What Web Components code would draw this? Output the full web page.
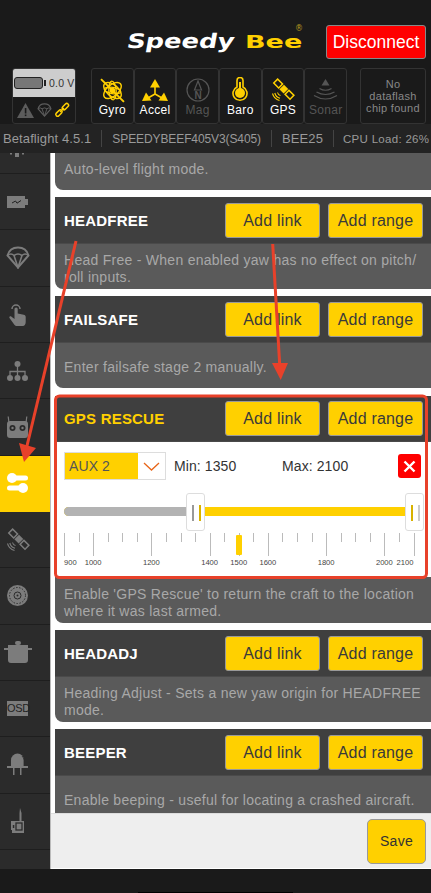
<!DOCTYPE html>
<html>
<head>
<meta charset="utf-8">
<style>
  html, body { margin: 0; padding: 0; background: #1a1a1a; }
  body { width: 431px; height: 893px; overflow: hidden; position: relative; font-family: "Liberation Sans", Arial, sans-serif; }
  #main { display: flex; height: 716px; }
</style>
</head>
<body>
<sb-header></sb-header>
<sb-status></sb-status>
<sb-infobar></sb-infobar>
<div id="main">
  <sb-nav></sb-nav>
  <sb-content>
    <sb-mode stub>Auto-level flight mode.</sb-mode>
    <sb-mode title="HEADFREE">Head Free - When enabled yaw has no effect on pitch/<br>roll inputs.</sb-mode>
    <sb-mode title="FAILSAFE" spaced>Enter failsafe stage 2 manually.</sb-mode>
    <sb-mode title="GPS RESCUE" active>
      <sb-range slot="range"></sb-range>
      Enable 'GPS Rescue' to return the craft to the location<br>where it was last armed.
    </sb-mode>
    <sb-mode title="HEADADJ">Heading Adjust - Sets a new yaw origin for HEADFREE<br>mode.</sb-mode>
    <sb-mode title="BEEPER" spaced>Enable beeping - useful for locating a crashed aircraft.</sb-mode>
  </sb-content>
</div>
<sb-footer></sb-footer>
<sb-annotations></sb-annotations>

<script>
const YELLOW = '#ffd000';

const ICONS = {
  gyro: `<svg width="25" height="25" viewBox="0 0 24 24" fill="none" stroke="currentColor" stroke-width="1.3"><ellipse cx="12" cy="12" rx="10" ry="5.5" transform="rotate(40 12 12)"/><ellipse cx="12" cy="12" rx="10" ry="5.5" transform="rotate(-40 12 12)"/><ellipse cx="12" cy="12" rx="9" ry="3.5" transform="rotate(85 12 12)"/><ellipse cx="12" cy="12" rx="8" ry="3" transform="rotate(10 12 12)"/><path d="M1 1L23 23" stroke-width="1.8"/><circle cx="12" cy="12" r="2" fill="currentColor"/></svg>`,
  accel: `<svg width="26" height="23" viewBox="0 0 26 23" fill="currentColor"><path d="M13 0L18 8.5H8Z"/><path d="M0 22L4 13.5L9.5 21.5Z"/><path d="M26 22L22 13.5L16.5 21.5Z"/><path d="M13 8V15M13 15L6 19M13 15L20 19" stroke="currentColor" stroke-width="1.6" fill="none"/></svg>`,
  mag: `<svg width="24" height="24" viewBox="0 0 24 24" fill="none" stroke="currentColor" stroke-width="1.2"><circle cx="12" cy="12" r="11"/><path d="M12 3L8.5 12H15.5Z"/><text x="12" y="21" font-family="Liberation Sans" font-size="10" font-weight="bold" text-anchor="middle" fill="currentColor" stroke="none">N</text></svg>`,
  baro: `<svg width="16" height="26" viewBox="0 0 16 26"><path d="M5 10V3.5a3 3 0 0 1 6 0V10a7 7 0 1 1-6 0Z" fill="none" stroke="currentColor" stroke-width="1.6"/><circle cx="8" cy="16" r="5" fill="currentColor"/><rect x="7" y="5" width="2" height="8" fill="currentColor"/></svg>`,
  sat: `<svg width="24" height="24" viewBox="0 0 24 24" fill="none" stroke="currentColor"><g transform="rotate(45 13 11)"><rect x="10" y="8" width="6" height="6.5" fill="currentColor" stroke="none"/><rect x="1.5" y="8.5" width="7" height="5.5" stroke-width="1.5"/><rect x="17.5" y="8.5" width="7" height="5.5" stroke-width="1.5"/></g><path d="M6.5 14.5a4 4 0 0 0 3 3M3.8 15a7 7 0 0 0 5.2 5.2M1.5 15.5a10 10 0 0 0 7 7" stroke-width="1.1"/></svg>`,
  sonar: `<svg width="25" height="23" viewBox="0 0 25 23" fill="none" stroke="currentColor" stroke-width="1.2"><path d="M12.5 0L16.5 6.5H8.5Z" fill="currentColor" stroke="none"/><path d="M6.5 9.5Q12.5 13 18.5 9.5M3.5 13Q12.5 18 21.5 13M1 16.5Q12.5 23.5 24 16.5"/></svg>`,
  warn: `<svg width="17" height="15" viewBox="0 0 17 15"><path d="M8.5 0L17 15H0Z" fill="currentColor"/><rect x="7.8" y="5" width="1.6" height="5.5" fill="#1a1a1a"/><rect x="7.8" y="11.5" width="1.6" height="1.6" fill="#1a1a1a"/></svg>`,
  chute: `<svg width="24" height="23" viewBox="0 0 24 23" fill="none" stroke="currentColor" stroke-width="2"><path d="M1.5 9.5C3 4 7 1.5 12 1.5S21 4 22.5 9.5L12 21.5Z"/><path d="M1.5 9.5Q5 6.5 8 9.5Q12 6.5 16 9.5Q19 6.5 22.5 9.5M8 9.5L12 21.5L16 9.5" stroke-width="1.6"/></svg>`,
  link: `<svg width="16" height="16" viewBox="0 0 16 16" fill="none" stroke="currentColor" stroke-width="1.5"><rect x="-3.2" y="-1.8" width="7.4" height="3.6" rx="1.8" transform="translate(4.6 11.4) rotate(-45)"/><rect x="-3.7" y="-1.8" width="7.4" height="3.6" rx="1.8" transform="translate(11.4 4.6) rotate(-45)"/><path d="M6 10L10 6"/></svg>`,
  battery: `<svg width="21" height="12" viewBox="0 0 21 12"><path d="M0 0H18V3H21V9H18V12H0Z" fill="currentColor"/><path d="M5 7L8.5 5L10 7.2L14 4.5" stroke="#222" fill="none"/></svg>`,
  hand: `<svg width="17" height="24" viewBox="0 0 17 24" fill="currentColor"><path d="M5.5 7a1.6 1.6 0 0 1 3.2 0v4.5l6 1.2c1.2.3 2 1.2 2 2.4V20c0 2-1 4-3 4H8c-1.5 0-2.3-.8-3-1.8L.5 16c-.7-1 .8-2.3 2-1.3l3 2.3Z"/><path d="M3 7a4 4 0 1 1 8 0" fill="none" stroke="currentColor" stroke-width="1.5"/></svg>`,
  tree: `<svg width="21" height="20" viewBox="0 0 21 20" fill="currentColor"><circle cx="10.5" cy="3" r="3"/><circle cx="3" cy="17" r="3"/><circle cx="10.5" cy="17" r="3"/><circle cx="18" cy="17" r="3"/><path d="M10.5 5V15M3 15V10.5H18V15" fill="none" stroke="currentColor" stroke-width="1.3"/></svg>`,
  remote: `<svg width="21" height="22" viewBox="0 0 21 22"><path d="M2 7L1.2 .5M19 7L19.8 .5" stroke="currentColor" stroke-width="1.2"/><rect x="0" y="5" width="21" height="17" rx="3" fill="currentColor"/><circle cx="5.5" cy="12" r="3" fill="#2b2b2b"/><circle cx="15.5" cy="12" r="3" fill="#2b2b2b"/><circle cx="5.5" cy="12" r="1.2" fill="currentColor"/><circle cx="15.5" cy="12" r="1.2" fill="currentColor"/></svg>`,
  toggles: `<svg width="21" height="20" viewBox="0 0 21 20" fill="#fff"><circle cx="5" cy="5" r="5"/><rect x="5" y="2.5" width="16" height="5" rx="2.5"/><circle cx="16" cy="15" r="5"/><rect x="0" y="12.5" width="16" height="5" rx="2.5"/></svg>`,
  motor: `<svg width="21" height="21" viewBox="0 0 21 21"><circle cx="10.5" cy="10.5" r="10.5" fill="currentColor"/><circle cx="10.5" cy="10.5" r="8" fill="none" stroke="#2b2b2b" stroke-width="1" stroke-dasharray="1.5 1.5"/><circle cx="10.5" cy="10.5" r="3.5" fill="none" stroke="#2b2b2b" stroke-width="1"/><circle cx="10.5" cy="10.5" r="1" fill="#2b2b2b"/></svg>`,
  pot: `<svg width="28" height="22" viewBox="0 0 28 22" fill="currentColor"><rect x="11" y="0" width="6" height="4" rx="2"/><path d="M4 4H24V7H28V9H24V19a3 3 0 0 1-3 3H7a3 3 0 0 1-3-3V9H0V7H4Z"/></svg>`,
  led: `<svg width="21" height="23" viewBox="0 0 21 23" fill="currentColor"><path d="M4 13V7a6.5 6.5 0 0 1 13 0v6Z"/><path d="M15 3a6.5 6.5 0 0 1 2 4v6" fill="none" stroke="#2b2b2b" stroke-width=".8"/><rect x="0" y="13" width="21" height="2"/><rect x="6" y="15" width="1.5" height="7"/><rect x="13" y="15" width="1.5" height="7"/></svg>`,
  vtx: `<svg width="14" height="26" viewBox="0 0 14 26" fill="currentColor"><path d="M9 0L10.5 5V13H8.5V5Z"/><path d="M0 13H13V25H1V22H0Z"/><rect x="5" y="15" width="6" height="7" fill="none" stroke="#2b2b2b" stroke-width="1.3"/><rect x="1.8" y="17" width="1.5" height="3" fill="#2b2b2b"/></svg>`,
  top: `<svg width="14" height="4" viewBox="0 0 14 4" fill="currentColor"><rect x="5" y="0" width="4" height="4"/><rect x="0" y="0" width="2" height="1.5"/><rect x="12" y="0" width="2" height="1.5"/></svg>`
};

class SbHeader extends HTMLElement {
  constructor() {
    super();
    this.attachShadow({ mode: 'open' });
    this.shadowRoot.innerHTML = `
      <style>
        :host { display: flex; align-items: flex-start; justify-content: flex-end; height: 68px; padding: 25px 5px 0 0; box-sizing: border-box; }
        .logo { display: flex; align-items: baseline; box-sizing: border-box; margin-right: 23px; margin-top: 2px; padding-top: 7px; color: #fff; width: 175px; height: 26px; position: relative; font-family: "DejaVu Sans", sans-serif; font-weight: bold; white-space: nowrap; }
        .word { display: inline-block; transform-origin: left bottom; line-height: 14px; }
        .speedy { font-size: 20px; margin-left: -2px; transform: scale(1.29, 1) skewX(-8deg); }
        .bee { font-size: 18px; color: ${YELLOW}; margin-left: 36px; transform: scale(1.5, 1); }
        .reg { position: absolute; right: 0; top: -2px; font-size: 8px; line-height: 8px; font-weight: normal; color: #b59a20; }
        button { width: 100px; height: 34px; background: #ff0000; color: #fff; border: 1px solid #888; border-radius: 3px; font: 17.5px "Liberation Sans", sans-serif; padding: 0; }
      </style>
      <div class="logo"><span class="word speedy">Speedy</span><span class="word bee">Bee</span><span class="reg">®</span></div>
      <button>Disconnect</button>`;
  }
}
customElements.define('sb-header', SbHeader);

class SbSensor extends HTMLElement {
  constructor() {
    super();
    this.attachShadow({ mode: 'open' });
    const on = this.hasAttribute('on');
    this.shadowRoot.innerHTML = `
      <style>
        :host { display: flex; flex-direction: column; align-items: center; justify-content: space-between; box-sizing: border-box; flex: 1; height: 100%; padding: 8px 0 6px; border: 1px solid #333; border-radius: 3px; color: ${on ? YELLOW : '#555'}; }
        .icon { height: 26px; display: flex; align-items: center; }
        .label { font-size: 12px; letter-spacing: .3px; color: ${on ? '#fff' : '#555'}; line-height: 14px; }
      </style>
      <div class="icon">${ICONS[this.getAttribute('icon')]}</div>
      <div class="label">${this.getAttribute('label')}</div>`;
  }
}
customElements.define('sb-sensor', SbSensor);

class SbStatus extends HTMLElement {
  constructor() {
    super();
    this.attachShadow({ mode: 'open' });
    this.shadowRoot.innerHTML = `
      <style>
        :host { display: flex; height: 56px; padding-left: 12px; padding-right: 5px; box-sizing: border-box; }
        .bat { width: 64px; border: 1px solid #333; border-radius: 3px; box-sizing: border-box; display: flex; flex-direction: column; margin-right: 15px; overflow: hidden; }
        .volt { height: 28px; background: #cdcdcd; display: flex; align-items: center; padding-left: 1px; gap: 6px; font-size: 10.5px; color: #333; letter-spacing: .2px; white-space: nowrap; }
        .cell { width: 29px; height: 12px; flex: none; box-sizing: border-box; background: #777; border: 1.5px solid #222; border-radius: 3px; position: relative; }
        .cell::after { content: ""; position: absolute; right: -4px; top: 1.5px; width: 2px; height: 6px; background: #222; }
        .flags { flex: 1; display: flex; align-items: center; justify-content: space-between; padding: 0 5px 0 4px; color: #5c5c5c; }
        .flags svg { display: block; }
        .flags .chute svg { width: 15px; height: 14px; }
        .flags .warn svg { width: 17px; height: 15px; }
        .flags .link { color: ${YELLOW}; }
        .sensors { width: 256px; display: flex; margin-right: 13px; }
        .flash { flex: 1; border: 1px solid #333; border-radius: 3px; display: flex; align-items: center; justify-content: center; text-align: center; color: #888; font-size: 11px; line-height: 12px; letter-spacing: .3px; }
      </style>
      <div class="bat">
        <div class="volt"><span class="cell"></span><span>0.0 V</span></div>
        <div class="flags"><span class="warn">${ICONS.warn}</span><span class="chute">${ICONS.chute}</span><span class="link">${ICONS.link}</span></div>
      </div>
      <div class="sensors">
        <sb-sensor icon="gyro" label="Gyro" on></sb-sensor>
        <sb-sensor icon="accel" label="Accel" on></sb-sensor>
        <sb-sensor icon="mag" label="Mag"></sb-sensor>
        <sb-sensor icon="baro" label="Baro" on></sb-sensor>
        <sb-sensor icon="sat" label="GPS" on></sb-sensor>
        <sb-sensor icon="sonar" label="Sonar"></sb-sensor>
      </div>
      <div class="flash">No<br>dataflash<br>chip found</div>`;
  }
}
customElements.define('sb-status', SbStatus);

class SbInfobar extends HTMLElement {
  constructor() {
    super();
    this.attachShadow({ mode: 'open' });
    this.shadowRoot.innerHTML = `
      <style>
        :host { display: flex; align-items: center; height: 29px; padding-left: 3px; box-sizing: border-box; color: #9a9a9a; font-size: 13px; white-space: nowrap; background: #232323; }
        i { width: 1px; height: 17px; background: #444; margin: 0 10px; flex: none; }
        .ver { letter-spacing: .1px; }
        .board { font-size: 12px; letter-spacing: -.1px; }
        .craft { letter-spacing: .1px; }
        .cpu { font-size: 11.5px; letter-spacing: .3px; margin-left: -1px; }
      </style>
      <span class="ver">Betaflight 4.5.1</span><i></i><span class="board">SPEEDYBEEF405V3(S405)</span><i></i><span class="craft">BEE25</span><i></i><span class="cpu">CPU Load: 26%</span>`;
  }
}
customElements.define('sb-infobar', SbInfobar);

class SbNav extends HTMLElement {
  constructor() {
    super();
    this.attachShadow({ mode: 'open' });
    const items = ['battery', 'chute', 'hand', 'tree', 'remote', 'toggles', 'sat', 'motor', 'pot', 'osd', 'led', 'vtx'];
    const rows = items.map(name => {
      const cls = name === 'toggles' ? 'item active' : 'item';
      const inner = name === 'osd' ? '<span class="osd">OSD</span>' : ICONS[name];
      return `<div class="${cls}"><div class="slot">${inner}</div></div>`;
    }).join('');
    this.shadowRoot.innerHTML = `
      <style>
        :host { display: flex; flex-direction: column; flex: none; width: 51px; height: 100%; background: #2b2b2b; border-right: 1px solid #bbb; box-sizing: border-box; overflow: hidden; color: #7c7c7c; }
        .first { height: 21px; flex: none; border-bottom: 1px solid #1e1e1e; box-sizing: border-box; padding-left: 10px; }
        .first svg { display: block; }
        .item { height: 56.33px; flex: none; box-sizing: border-box; border-bottom: 1px solid #1e1e1e; display: flex; align-items: center; }
        .slot { width: 35px; display: flex; justify-content: center; }
        .active { background: ${YELLOW}; border-bottom-color: ${YELLOW}; }
        .osd { background: #7c7c7c; color: #222; font-size: 11px; width: 21px; height: 15px; line-height: 15px; text-align: center; letter-spacing: -.3px; }
      </style>
      <div class="first">${ICONS.top}</div>${rows}`;
  }
}
customElements.define('sb-nav', SbNav);

class SbContent extends HTMLElement {
  constructor() {
    super();
    this.attachShadow({ mode: 'open' });
    this.shadowRoot.innerHTML = `
      <style>
        :host { display: flex; flex-direction: column; flex: 1; min-width: 0; background: #fff; }
        .list { flex: 1; min-height: 0; overflow: hidden; padding-left: 4px; display: flex; flex-direction: column; gap: 7px; }
        .bar { flex: none; height: 56px; box-sizing: border-box; background: #eee; border-top: 1px solid #ddd; border-bottom: 1px solid #fff; display: flex; justify-content: flex-end; align-items: center; padding-right: 5px; }
        button { width: 59px; height: 45px; background: ${YELLOW}; color: #333; border: 1px solid #999; border-radius: 5px; font: 14px "Liberation Sans", sans-serif; letter-spacing: .3px; padding: 0; }
      </style>
      <div class="list"><slot></slot></div>
      <div class="bar"><button>Save</button></div>`;
  }
}
customElements.define('sb-content', SbContent);

class SbMode extends HTMLElement {
  constructor() {
    super();
    this.attachShadow({ mode: 'open' });
    const stub = this.hasAttribute('stub');
    const head = stub ? '' : `
      <div class="head">
        <span class="name">${this.getAttribute('title')}</span>
        <button>Add link</button><button>Add range</button>
      </div>`;
    this.shadowRoot.innerHTML = `
      <style>
        :host { display: block; flex: none; border-radius: 0 0 0 8px; overflow: hidden; background: #5a5a5a; font-size: 14px; }
        :host([active]) { margin-top: 1px; }
        .head { height: 47px; box-sizing: border-box; background: #3f3f3f; border-bottom: 1px solid #4a4a4a; display: flex; align-items: center; padding: 0 8px 0 9px; gap: 8px; }
        :host([active]) .head { height: 46px; }
        .name { flex: 1; color: #fff; font-weight: bold; font-size: 15px; letter-spacing: .2px; }
        :host([active]) .name { color: ${YELLOW}; }
        button { width: 95px; height: 35px; background: ${YELLOW}; color: #3a3a3a; border: 1px solid #999; border-radius: 3px; font: 16px "Liberation Sans", sans-serif; letter-spacing: .2px; padding: 1px 0 0; }
        .desc { padding: 8px 9px 4px; line-height: 16.5px; color: #a8a8a8; letter-spacing: .27px; white-space: nowrap; }
        :host([active]) .desc { padding: 9px 9px 4px; }
        :host([stub]) .desc { padding: 8px 9px 12.5px; }
        :host([spaced]) .desc { padding: 16px 9px 12.5px; }
      </style>
      ${head}
      <slot name="range"></slot>
      <div class="desc"><slot></slot></div>`;
  }
}
customElements.define('sb-mode', SbMode);

class SbRange extends HTMLElement {
  constructor() {
    super();
    this.attachShadow({ mode: 'open' });
    const majors = [900, 1000, 1200, 1400, 1500, 1600, 1800, 2000, 2100];
    const pos = v => (v - 900) / 1200 * 100;
    let ticks = '';
    for (let v = 900; v <= 2100; v += 50) {
      const major = majors.includes(v);
      ticks += `<i class="${major ? 'big' : ''}" style="left:${pos(v)}%"></i>`;
      if (major) {
        const edge = v === 900 ? 'first' : v === 2100 ? 'last' : '';
        ticks += `<b class="${edge}" style="left:${pos(v)}%">${v}</b>`;
      }
    }
    this.shadowRoot.innerHTML = `
      <style>
        :host { display: block; height: 135px; box-sizing: border-box; background: #fff; padding: 10px 10px 0 9px; color: #333; }
        .row { display: flex; align-items: center; height: 28px; font-size: 14px; letter-spacing: .1px; }
        .select { display: flex; width: 102px; height: 28px; box-sizing: border-box; border: 1px solid #ddd; margin-right: 8px; flex: none; }
        .select span { width: 73px; background: ${YELLOW}; color: #555; display: flex; align-items: center; padding-left: 4px; box-sizing: border-box; }
        .select em { flex: 1; display: flex; align-items: center; justify-content: center; }
        .min { width: 108px; }
        .max { flex: 1; }
        .del { width: 23px; height: 24px; background: #f00; border-radius: 3px; display: flex; align-items: center; justify-content: center; }
        .slider { position: relative; height: 38px; margin-top: 13px; }
        .track { position: absolute; left: 0; width: 345px; top: 14px; height: 9px; border-radius: 5px 0 0 5px; background: ${YELLOW}; overflow: hidden; }
        .track::before { content: ""; position: absolute; left: 0; top: 0; bottom: 0; width: 122px; background: #b3b3b3; }
        .handle { position: absolute; top: 0; width: 19px; height: 38px; box-sizing: border-box; background: #fff; border: 1px solid #ddd; border-radius: 3px; }
        .handle i { position: absolute; top: 11px; height: 16px; width: 2px; }
        .scale { position: relative; height: 36px; width: 349.5px; margin-top: 2px; }
        .scale i { position: absolute; top: 0; width: 1px; height: 9px; background: #bbb; }
        .scale i.big { height: 23px; }
        .scale b { position: absolute; top: 25px; font: 7.6px "Liberation Sans", sans-serif; color: #444; transform: translateX(-50%); }
        .scale b.first { transform: none; }
        .scale b.last { transform: translateX(-100%); }
        .mark { position: absolute; left: 172px; top: 2px; width: 6px; height: 20px; background: ${YELLOW}; border-radius: 1px; }
      </style>
      <div class="row">
        <div class="select"><span>AUX 2</span><em><svg width="17" height="9" viewBox="0 0 17 9" fill="none" stroke="#e8661a" stroke-width="1.3"><path d="M1 1L8.5 8L16 1"/></svg></em></div>
        <div class="min">Min: 1350</div>
        <div class="max">Max: 2100</div>
        <div class="del"><svg width="13" height="13" viewBox="0 0 13 13" stroke="#fff" stroke-width="2.4"><path d="M1.5 1.5L11.5 11.5M11.5 1.5L1.5 11.5"/></svg></div>
      </div>
      <div class="slider">
        <div class="track"></div>
        <div class="handle" style="left:122px"><i style="left:5px;background:#999"></i><i style="left:12px;background:#d8b200"></i></div>
        <div class="handle" style="left:341px"><i style="left:5px;background:#d8b200"></i><i style="left:12px;background:#ccc"></i></div>
      </div>
      <div class="scale">${ticks}<div class="mark"></div></div>`;
  }
}
customElements.define('sb-range', SbRange);

class SbFooter extends HTMLElement {
  constructor() {
    super();
    this.attachShadow({ mode: 'open' });
    this.shadowRoot.innerHTML = `
      <style>
        :host { display: flex; justify-content: center; align-items: flex-end; height: 24px; background: #1a1a1a; }
        div { width: 155px; height: 1px; background: #000; }
      </style>
      <div></div>`;
  }
}
customElements.define('sb-footer', SbFooter);

// the red marks someone drew over the screenshot
class SbAnnotations extends HTMLElement {
  constructor() {
    super();
    this.attachShadow({ mode: 'open' });
    this.shadowRoot.innerHTML = `
      <style>
        :host { position: absolute; left: 0; top: 0; width: 431px; height: 893px; pointer-events: none; }
        svg { display: block; }
      </style>
      <svg width="431" height="893" viewBox="0 0 431 893" fill="none" stroke="#e8412a">
        <rect x="55.5" y="396" width="371" height="181.5" rx="4" stroke-width="3"/>
        <path d="M76 241L26 450" stroke-width="3"/>
        <path d="M24 462L19 443L36 448Z" fill="#e8412a" stroke="none"/>
        <path d="M272.7 244L280 370" stroke-width="3"/>
        <path d="M280.7 380L272 363L288 363Z" fill="#e8412a" stroke="none"/>
      </svg>`;
  }
}
customElements.define('sb-annotations', SbAnnotations);
</script>
</body>
</html>
